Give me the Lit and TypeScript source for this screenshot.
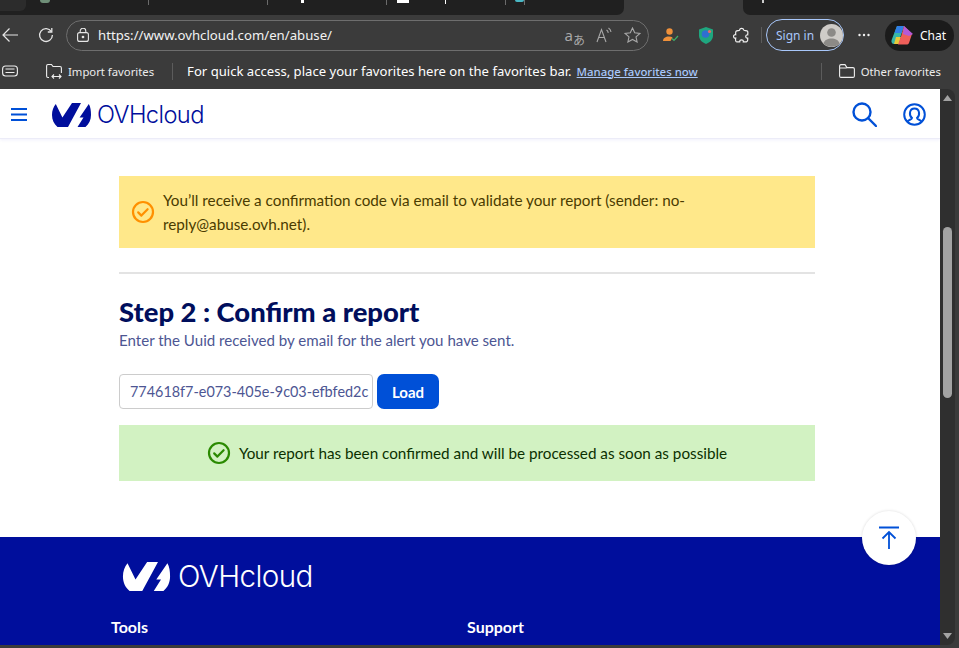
import { LitElement, html, css, svg } from 'lit';
import { customElement } from 'lit/decorators.js';

const ovhMark = svg`
  <path d="M3.8 1L10.4 14.4 20 0H29L16 24H5.5C2 21 0 17 0 12 0 7.6 1.4 3.800 3.800 1z"/>
  <path d="M36.8 1L27.6 14.5H31.5L25.5 24H33.500C37 21 39 17 39 12 39 7.6 38.500 4 36.800 1z"/>
`;

@customElement('app-root')
export class AppRoot extends LitElement {
  static styles = css`
    :host {
      display: flex;
      flex-direction: column;
      width: 959px;
      height: 648px;
      overflow: hidden;
      background: #3b3b3b;
      font-family: 'Noto Sans', sans-serif;
      color: #fff;
    }
    svg { display: block; flex: none; }

    /* browser chrome */
    .tabs { display: flex; height: 15px; flex: none; }
    .strip { background: #202020; height: 15px; overflow: hidden; display: flex; }
    .strip.left { width: 624px; border-bottom-right-radius: 7px; }
    .strip.right { width: 216px; margin-left: 119px; border-bottom-left-radius: 7px; flex: none; }
    .home { width: 26px; height: 11px; background: #2c2c2c; border-bottom-right-radius: 6px; flex: none; }
    .tab { height: 5px; border-right: 1px solid #6b6b6b; flex: none; display: flex; }
    .tab i { display: block; background: #fff; height: 2px; }
    .t1 { width: 122px; }
    .t1 i { width: 10px; height: 3px; margin-left: 14px; background: #6f8f78; border-radius: 0 0 5px 5px; }
    .t2 { width: 118px; }
    .t3 { width: 118px; }
    .t3 i { width: 3px; height: 3px; margin-left: 33px; }
    .t4 { width: 118px; }
    .t4 i { width: 12px; height: 3px; margin-left: 10px; }
    .t4 b { display: block; width: 1px; height: 4px; background: #fff; margin-left: 36px; }
    .t5 i { width: 9px; height: 2px; margin-left: 9px; background: #49b7c4; border-radius: 0 0 5px 5px; }
    .plus { width: 2px; height: 3px; background: #ccc; margin-left: 19px; }

    .toolbar { display: flex; align-items: center; height: 40px; flex: none; }
    .back { margin-left: 2px; }
    .reload { margin-left: 20px; }
    .url {
      display: flex;
      align-items: center;
      box-sizing: border-box;
      width: 583px;
      height: 31px;
      margin-left: 12px;
      padding-left: 10px;
      border: 1px solid #6e6e6e;
      border-radius: 16px;
      font-size: 13.2px;
      color: #f2f2f2;
    }
    .url .address { margin-left: 9px; flex: 1; }
    .translate { display: flex; align-items: flex-end; color: #a8a8a8; font-size: 15px; line-height: 16px; margin-right: 11px; }
    .translate small { font: 12px/12px 'Noto Sans CJK JP', sans-serif; margin-bottom: -3px; }
    .url .star { margin: 0 7px 0 12px; }
    .ext { display: flex; align-items: center; gap: 19px; margin-left: 14px; }
    .tsep { width: 1px; height: 16px; background: #5c5c5c; margin-left: 11px; }
    .signin {
      display: flex;
      align-items: center;
      box-sizing: border-box;
      width: 78px;
      height: 32px;
      margin-left: 4px;
      padding-left: 9px;
      border: 1px solid #a8c7fa;
      border-radius: 16px;
      font-size: 12px;
      color: #a8c7fa;
      white-space: nowrap;
    }
    .signin svg { margin-left: 6px; }
    .dots { margin-left: 14px; }
    .chat {
      display: flex;
      align-items: center;
      box-sizing: border-box;
      width: 69px;
      height: 31px;
      margin-left: 15px;
      padding-left: 6px;
      gap: 7px;
      background: #1b1b1b;
      border-radius: 16px;
      font-size: 12px;
    }

    .favs { display: flex; align-items: center; box-sizing: border-box; height: 34px; padding-bottom: 2px; flex: none; font-size: 13.1px; white-space: nowrap; }
    .favs .small { font-size: 11.3px; color: #ececec; margin-left: 6px; }
    .fsep { width: 1px; height: 17px; background: #5c5c5c; flex: none; }
    .favs a { color: #a8c7fa; text-decoration: underline; font-size: 11.4px; font-weight: 500; margin-left: 5px; }

    /* page */
    .viewport { display: flex; height: 556px; flex: none; }
    .page { width: 940px; position: relative; background: #fff; overflow: hidden; color: #000e5c; }
    .scrollbar {
      display: flex;
      flex-direction: column;
      align-items: center;
      width: 15px;
      background: #2f2f2f;
      border-radius: 0 8px 8px 0;
    }
    .scrollbar .up { margin-top: 6px; }
    .thumb { width: 9px; height: 171px; margin-top: 126px; background: #a3a3a3; border-radius: 5px; }
    .scrollbar .down { margin-top: auto; margin-bottom: 6px; }

    .head {
      display: flex;
      align-items: center;
      height: 50px;
      box-sizing: border-box;
      padding: 2px 0 0 11px;
      border-bottom: 1px solid #ececf8;
      box-shadow: 0 1px 3px rgba(60, 70, 200, 0.08);
    }
    .logo { display: flex; align-items: center; }
    .head .logo { margin-left: 25px; color: #000e9c; }
    .wordmark { font-family: Inter, sans-serif; font-weight: 300; letter-spacing: -0.6px; line-height: 1; }
    .head .wordmark { font-size: 23.7px; margin-left: 6px; }
    .head .search { margin-left: auto; }
    .head .user { margin: 0 14px 0 26px; }

    main { width: 696px; margin-left: 119px; padding-top: 37px; font-family: Lato, sans-serif; font-size: 15.25px; line-height: 24px; }
    .notice {
      display: flex;
      align-items: center;
      box-sizing: border-box;
      height: 72px;
      padding: 0 120px 0 12px;
      gap: 8px;
      background: #ffe88a;
      color: #4a3b00;
    }
    hr { height: 2px; margin: 24px 0 0; border: 0; background: #e3e3e3; }
    h2 { margin: 21px 0 1px; font-size: 27.4px; line-height: 34px; font-weight: 900; color: #000e5c; }
    .sub { margin: 0; color: #4d5693; line-height: 20px; font-size: 15.1px; }
    .form { display: flex; gap: 4px; margin-top: 24px; }
    .field {
      box-sizing: border-box;
      width: 254px;
      height: 35px;
      padding: 0 10px;
      border: 1px solid #cccccc;
      border-radius: 4px;
      background: #fff;
      color: #4d5693;
      font: 14.4px/33px Lato, sans-serif;
      overflow: hidden;
      white-space: nowrap;
    }
    .load {
      width: 62px;
      height: 35px;
      padding: 0;
      border: 0;
      border-radius: 7px;
      background: #0050d7;
      color: #fff;
      font: 700 15px Lato, sans-serif;
    }
    .success {
      display: flex;
      align-items: center;
      justify-content: center;
      gap: 8px;
      height: 56px;
      margin-top: 16px;
      background: #d2f2c2;
      color: #0b3000;
    }

    footer { margin-top: 56px; height: 120px; background: #000e9c; color: #fff; }
    footer .logo { padding: 25px 0 0 122px; }
    footer .wordmark { font-size: 29.6px; margin-left: 7px; }
    .cols { display: flex; margin-top: 25px; padding-left: 111px; font: 700 16px/20px Lato, sans-serif; }
    .cols span { width: 356px; }

    .top {
      position: absolute;
      left: 862px;
      top: 422px;
      display: flex;
      align-items: center;
      justify-content: center;
      width: 54px;
      height: 54px;
      border-radius: 50%;
      background: #fff;
      box-shadow: 0 0 3px rgba(0, 0, 0, 0.15);
    }
  `;

  private _logo(w: number, h: number) {
    return html`<svg width=${w} height=${h} viewBox="0 0 39 24" fill="currentColor">${ovhMark}</svg>`;
  }

  private _check(color: string) {
    return html`<svg width="24" height="24" viewBox="0 0 24 24" fill="none" stroke=${color} stroke-width="2.2" stroke-linecap="round" stroke-linejoin="round">
      <circle cx="12" cy="12" r="10"/><path d="M7.2 12.4l3.2 3.2 6.2-6.4"/>
    </svg>`;
  }

  private _chrome() {
    return html`
      <div class="tabs">
        <div class="strip left">
          <div class="home"></div>
          <div class="tab t1"><i></i></div>
          <div class="tab t2"></div>
          <div class="tab t3"><i></i></div>
          <div class="tab t4"><i></i><b></b></div>
          <div class="tab t5"><i></i></div>
        </div>
        <div class="strip right"><div class="plus"></div></div>
      </div>
      <div class="toolbar">
        <svg class="back" width="16" height="16" viewBox="0 0 16 16" fill="none" stroke="#e6e6e6" stroke-width="1.2"><path d="M16 8H1M7.5 1.5L1 8l6.5 6.5"/></svg>
        <svg class="reload" width="16" height="16" viewBox="0 0 16 16" fill="none" stroke="#e6e6e6" stroke-width="1.3"><path d="M13.4 4.6A6.4 6.4 0 1 0 14.4 8"/><path d="M13.8 1v4h-4"/></svg>
        <div class="url">
          <svg width="12" height="14" viewBox="0 0 12 14" fill="none" stroke="#e6e6e6" stroke-width="1.1"><rect x="0.6" y="4.6" width="10.8" height="8.8" rx="2"/><path d="M3.2 4.6V3a2.8 2.8 0 0 1 5.6 0v1.6"/><circle cx="6" cy="9" r="0.8" fill="#e6e6e6"/></svg>
          <span class="address">https://www.ovhcloud.com/en/abuse/</span>
          <span class="translate">a<small>あ</small></span>
          <svg width="16" height="16" viewBox="0 0 16 16" fill="none" stroke="#a8a8a8" stroke-width="1.1"><path d="M1 15L5.5 2.5 10 15M2.7 10.5h5.6M10.5 3c1 .6 1.6 1.6 1.8 2.8M12.5 1c1.4 1 2.3 2.4 2.5 4"/></svg>
          <svg class="star" width="17" height="16" viewBox="0 0 17 16" fill="none" stroke="#a8a8a8" stroke-width="1.1"><path d="M8.5 1l2.2 4.8 5.2.6-3.900 3.500 1.100 5.100-4.600-2.600L3.900 15 5 9.900 1.100 6.400l5.200-.6z"/></svg>
        </div>
        <div class="ext">
          <svg width="16" height="14" viewBox="0 0 16 14"><circle cx="6.5" cy="3.500" r="3.200" fill="#f0913a"/><path d="M0 13c0-3 2.500-4.600 6-4.600 1.400 0 2.600.3 3.500.8L7.500 13z" fill="#f0913a"/><path d="M9 10.500l2 2 4-4.500" fill="none" stroke="#3fae6a" stroke-width="1.2"/></svg>
          <svg width="16" height="17" viewBox="0 0 16 17"><path d="M8 0l7 2.500v6c0 4-3 7-7 8.500-4-1.500-7-4.500-7-8.500v-6z" fill="#1fa67f"/><circle cx="7.5" cy="7" r="3.800" fill="#2f6fd0"/><circle cx="11.5" cy="4.500" r="1.600" fill="#e86a6a"/></svg>
          <svg width="17" height="17" viewBox="0 0 17 17" fill="none" stroke="#f0f0f0" stroke-width="1.2"><path d="M6.500 3.200a2.200 2.200 0 0 1 4.300 0c.2.700 2.900.2 3.700 1 .7.800.2 2.600.2 3.600-2.300-.6-2.900 3.700 0 3.300 0 1 .3 2.700-.7 3.400-.8.700-3 .3-3.700.3.500-2.700-4-2.700-3.500 0-1.200.2-2.800.3-3.800-.4-.7-.8-.4-2.500-.3-3.300-2.900.5-2.900-3.900 0-3.400 0-1-.3-2.800.4-3.500.8-.7 3.100-.3 3.400-1z"/></svg>
        </div>
        <div class="tsep"></div>
        <div class="signin">
          Sign in
          <svg width="23" height="23" viewBox="0 0 23 23"><circle cx="11.5" cy="11.500" r="11.500" fill="#cfccc8"/><circle cx="11.5" cy="8.500" r="4.300" fill="#8c8a87"/><path d="M3.500 19.500c1-3.600 4.200-5 8-5s7 1.400 8 5a11.500 11.500 0 0 1-16 0z" fill="#8c8a87"/></svg>
        </div>
        <svg class="dots" width="12" height="4" viewBox="0 0 12 4" fill="#f0f0f0"><circle cx="1.5" cy="2" r="1.2"/><circle cx="6" cy="2" r="1.2"/><circle cx="10.5" cy="2" r="1.2"/></svg>
        <div class="chat">
          <svg width="22" height="22" viewBox="0 0 22 22">
            <path d="M6 2h7L7 20H3C1 20 0 18 .6 16z" fill="#37b6a8"/>
            <path d="M6 2h7l-2.500 7H3.500z" fill="#2f7fe6"/>
            <path d="M3 20l2-7h5l-2 7z" fill="#e8c93a"/>
            <path d="M13 2l8 8-3 9c-.5 1-1.500 1.500-2.500 1.500H7l3-8z" fill="#ef5f5a"/>
            <path d="M13 2l9 8-4 2-6-2z" fill="#b45ad8"/>
          </svg>
          Chat
        </div>
      </div>
      <div class="favs">
        <svg style="margin-left: 2px" width="16" height="12" viewBox="0 0 16 12" fill="none" stroke="#eee" stroke-width="1.1"><rect x="0.6" y="1" width="14.800" height="10" rx="3"/><path d="M3.500 4h9M3.500 7.500h9"/></svg>
        <svg style="margin-left: 28px" width="16" height="16" viewBox="0 0 16 16" fill="none" stroke="#eee" stroke-width="1.1"><path d="M3 14.500H2A1.500 1.500 0 0 1 .6 13V3A1.500 1.500 0 0 1 2 1.500h3.500L7 3.500h7A1.500 1.500 0 0 1 15.400 5v5M6 13.500h9M8 11.500l-2 2 2 2M13 11.500l2 2-2 2"/></svg>
        <span class="small">Import favorites</span>
        <div class="fsep" style="margin-left: 18px"></div>
        <span style="margin-left: 14px">For quick access, place your favorites here on the favorites bar.</span>
        <a>Manage favorites now</a>
        <div class="fsep" style="margin-left: 123px"></div>
        <svg style="margin-left: 17px" width="16" height="14" viewBox="0 0 16 14" fill="none" stroke="#eee" stroke-width="1.1"><path d="M2 .6h4l2 3h6A1.500 1.500 0 0 1 15.400 5v7a1.500 1.500 0 0 1-1.400 1.400H2A1.500 1.500 0 0 1 .6 12V2A1.500 1.500 0 0 1 2 .6zM.6 4h7"/></svg>
        <span class="small">Other favorites</span>
      </div>
    `;
  }

  render() {
    return html`
      ${this._chrome()}
      <div class="viewport">
        <div class="page">
          <div class="head">
            <svg width="16" height="13" viewBox="0 0 16 13" fill="#0050d7"><rect width="16" height="2"/><rect y="5.500" width="16" height="2"/><rect y="11" width="16" height="2"/></svg>
            <div class="logo">${this._logo(39, 24)}<span class="wordmark">OVHcloud</span></div>
            <svg class="search" width="25" height="25" viewBox="0 0 25 25" fill="none" stroke="#0050d7" stroke-width="2.4" stroke-linecap="round"><circle cx="10" cy="10" r="8.500"/><path d="M16 16l8 8"/></svg>
            <svg class="user" width="23" height="23" viewBox="0 0 23 23" fill="none" stroke="#0050d7" stroke-width="2"><circle cx="11.5" cy="11.500" r="10.300"/><path d="M4.500 19c0-2.500 4.300-2 4.500-4-3.500-3-2.500-9.500 2.500-9.500s6 6.500 2.500 9.500c.2 2 4.500 1.500 4.500 4"/></svg>
          </div>
          <main>
            <div class="notice">
              ${this._check('#ff9000')}
              <span>You’ll receive a confirmation code via email to validate your report (sender: no-reply@abuse.ovh.net).</span>
            </div>
            <hr />
            <h2>Step 2 : Confirm a report</h2>
            <p class="sub">Enter the Uuid received by email for the alert you have sent.</p>
            <div class="form">
              <div class="field">774618f7-e073-405e-9c03-efbfed2c</div>
              <button class="load">Load</button>
            </div>
            <div class="success">
              ${this._check('#2a8a00')}
              <span>Your report has been confirmed and will be processed as soon as possible</span>
            </div>
          </main>
          <footer>
            <div class="logo">${this._logo(49, 29)}<span class="wordmark">OVHcloud</span></div>
            <div class="cols"><span>Tools</span><span>Support</span></div>
          </footer>
          <div class="top">
            <svg width="22" height="24" viewBox="0 0 22 24" fill="none" stroke="#0050d7" stroke-width="1.8"><path d="M1 1.500h20M11 23V6M4.500 12.500L11 6l6.500 6.500"/></svg>
          </div>
        </div>
        <div class="scrollbar">
          <svg class="up" width="9" height="6" viewBox="0 0 9 6" fill="#a3a3a3"><path d="M4.500 0L9 6H0z"/></svg>
          <div class="thumb"></div>
          <svg class="down" width="9" height="6" viewBox="0 0 9 6" fill="#a3a3a3"><path d="M0 0h9L4.500 6z"/></svg>
        </div>
      </div>
    `;
  }
}
